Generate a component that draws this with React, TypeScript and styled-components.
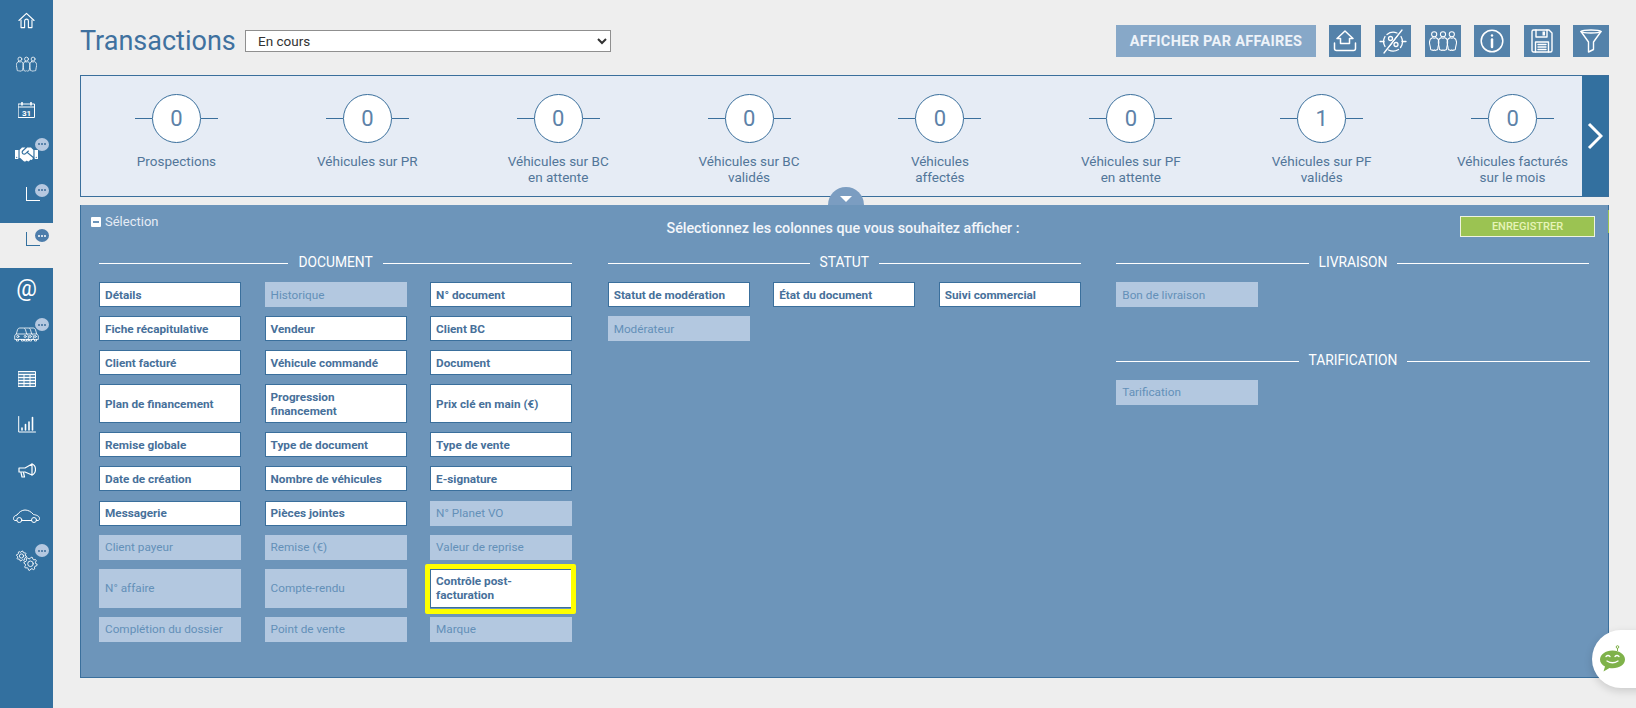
import React from 'react';
import styled, { createGlobalStyle } from 'styled-components';
import { FaHandshake } from 'react-icons/fa';

const Global = createGlobalStyle`
  html, body { margin: 0; padding: 0; background: #eeeeee; height: 708px; overflow: hidden; }
  body { font-family: Roboto, "Liberation Sans", sans-serif; }
  * { box-sizing: border-box; }
`;

const Page = styled.div`display: flex; width: 1636px; height: 708px;`;
const Sidebar = styled.nav`width: 53px; height: 708px; background: #33709f; flex: none;`;
const NavItem = styled.div<{ $active?: boolean }>`
  position: relative; height: 45.4px; display: flex; align-items: center; justify-content: center;
  padding-bottom: 4px; color: ${p => (p.$active ? '#33709f' : '#fff')};
  background: ${p => (p.$active ? '#eeeeee' : 'transparent')};
  &:nth-child(-n+6) { height: 44.67px; }
`;
const Corner = styled.span`
  display: block; width: 14px; height: 14px; margin: 0 0 10px 13px;
  border-left: 1px solid currentColor; border-bottom: 1px solid currentColor;
`;
const Badge = styled.span<{ $active?: boolean; $top: number }>`
  position: absolute; left: 35px; top: ${p => p.$top}px; width: 14px; height: 13px; border-radius: 50%;
  background: ${p => (p.$active ? '#4d7dab' : '#b5c8e0')}; color: ${p => (p.$active ? '#fff' : '#3b6d9a')};
  display: flex; align-items: center; justify-content: center; gap: 1px;
  & > i { width: 2px; height: 2px; border-radius: 50%; background: currentColor; display: block; }
`;
const AtSign = styled.span`font: 400 23px/1 Roboto, sans-serif;`;

const Main = styled.main`flex: 1; min-width: 0; padding: 25px 27px 0;`;
const Header = styled.header`display: flex; align-items: center; height: 32px; margin-bottom: 18px;`;
const Title = styled.h1`margin: 0 10px 0 0; font: 400 27px/32px Roboto, sans-serif; color: #3f719f; width: 155px; white-space: nowrap;`;
const Select = styled.select`
  width: 366px; height: 22px; border: 1px solid #8f8f8f; background: #fff; color: #333;
  font: 400 13.5px Roboto, sans-serif; padding-left: 8px;
`;
const Tools = styled.div`margin-left: auto; display: flex; align-items: stretch; height: 32px;`;
const ByDeal = styled.button`
  width: 200px; margin-right: 13px; border: 0; background: #87a8c8; color: #eef3f9;
  font: 700 14.5px Roboto, sans-serif; letter-spacing: 0.3px; text-transform: uppercase; padding: 0;
`;
const IconBtn = styled.button<{ $w: number; $ml: number }>`
  width: ${p => p.$w}px; margin-left: ${p => p.$ml}px; border: 0; padding: 0; background: #5482aa; color: #fff;
  display: flex; align-items: center; justify-content: center;
`;

const Kpis = styled.section`
  position: relative; height: 122px; background: #e6ecf5; border: 1px solid #3a6f9c;
  display: grid; grid-template-columns: repeat(8, 1fr); padding-top: 18px;
`;
const Kpi = styled.div`display: flex; flex-direction: column; align-items: center;`;
const KpiTop = styled.div`display: flex; align-items: center; margin-bottom: 10px;`;
const Tick = styled.span`width: 17px; height: 1px; background: #3a6f9c;`;
const Circle = styled.span`
  width: 49px; height: 49px; border-radius: 50%; border: 1px solid #3a6f9c; background: #fff;
  color: #5d82a8; font: 400 22px/47px Roboto, sans-serif; text-align: center;
`;
const KpiLabel = styled.span`
  font: 400 13.5px/16px Roboto, sans-serif; color: #527699; text-align: center; white-space: pre-line;
`;
const NextBtn = styled.div`
  position: absolute; top: 0; right: 0; bottom: 0; width: 26px; background: #33709f;
  display: flex; align-items: center; justify-content: center; color: #fff;
`;

const Panel = styled.section`
  position: relative; margin-top: 8px; height: 473px; background: #6d95ba;
  border-left: 1px solid #3a6f9c; border-bottom: 1px solid #3a6f9c; border-right: 1px solid #3a6f9c;
`;
const Notch = styled.div`
  position: absolute; top: -18px; left: 747px; width: 36px; height: 18px; background: #7b9dc1;
  border-radius: 18px 18px 0 0; display: flex; justify-content: center; padding-top: 9px;
  &::after { content: ''; width: 0; height: 0; border-left: 6px solid transparent; border-right: 6px solid transparent; border-top: 6px solid #fff; }
`;
const Sliver = styled.span`position: absolute; top: 5px; right: -1px; width: 1px; height: 23px; background: #9bc352;`;
const Head = styled.div`
  height: 47px; padding: 11px 13px 0 10px; display: grid; grid-template-columns: 1fr auto 1fr; align-items: start;
`;
const Toggle = styled.div`display: flex; align-items: center; gap: 4px; color: #e6ecf5; font: 400 13px/12px Roboto, sans-serif;`;
const Minus = styled.span`
  width: 10px; height: 10px; border-radius: 1px; background: #fff; display: flex; align-items: center; justify-content: center;
  &::after { content: ''; width: 6px; height: 2px; background: #6d95ba; }
`;
const Prompt = styled.div`font: 500 14.3px/20px Roboto, sans-serif; color: #f3f6fa; padding-top: 2px;`;
const Save = styled.button`
  justify-self: end; width: 135px; height: 21px; border: 1px solid #eef3e0; background: #9bc352; color: #e6f4b8;
  font: 500 11px Roboto, sans-serif; padding: 0;
`;
const Columns = styled.div`padding: 0 18.5px 0 18px; display: grid; grid-template-columns: repeat(3, 1fr); column-gap: 35.5px;`;
const Column = styled.div`display: flex; flex-direction: column; gap: 42.5px;`;
const SectionHead = styled.div`
  display: flex; align-items: center; gap: 10px; height: 20px; margin-bottom: 10px;
  color: #fff; font: 400 13.8px/20px Roboto, sans-serif;
  &::before, &::after { content: ''; flex: 1; height: 1px; background: #fff; margin-top: 3px; }
`;
const Items = styled.div`display: grid; grid-template-columns: repeat(3, 1fr); column-gap: 23.5px; row-gap: 9.1px;`;
const Item = styled.div<{ $on?: boolean; $mark?: boolean }>`
  position: relative; min-height: 25px; display: flex; align-items: center; padding: 4.5px 5px;
  font: ${p => (p.$on ? 700 : 400)} 11.75px/14px Roboto, sans-serif;
  background: ${p => (p.$on ? '#fff' : '#b3c8e0')}; color: ${p => (p.$on ? '#47709a' : '#6390b8')};
  border: 1px solid ${p => (p.$on ? '#3a6f9c' : '#b3c8e0')};
  ${p => p.$mark ? `&::after { content: ''; position: absolute; inset: -6px -5px -7px -6px; border: 5px solid #ffff00; border-radius: 2px; pointer-events: none; }` : ''}
`;
const Bot = styled.div`
  position: fixed; left: 1592px; top: 630px; width: 60px; height: 58px; border-radius: 29px 0 0 29px; background: #fff;
  box-shadow: 0 3px 8px rgba(0,0,0,.15); display: flex; padding: 15px 0 0 7px;
`;

const S = { fill: 'none', stroke: 'currentColor', strokeWidth: 1.2, strokeLinecap: 'round' as const, strokeLinejoin: 'round' as const };
const BAR = '#33709f';

const Home = () => <svg width="17" height="17" viewBox="0 0 18 18" {...S}><path d="M1 9 9 1.500 17 9" /><path d="M3.200 8.500V16.500H7V9.500a2 2 0 0 1 4 0v7h3.800V8.500" /></svg>;
const Person = ({ x }: { x: number }) => (
  <g transform={`translate(${x} 0)`}>
    <circle cx="5" cy="3" r="2.500" />
    <path d="M3.200 6.300C1.200 7 .3 9 .5 11.500c.2 2 1 3.500 1 5.500 0 1 1 1.500 1.500 1 .4.800 1.600.800 2 0 .4.800 1.600.800 2 0 .5.500 1.500 0 1.500-1 0-2 .8-3.500 1-5.500.2-2.500-.7-4.500-2.700-5.200-1 .6-2.600.6-3.600 0Z" />
  </g>
);
const People = () => <svg width="21" height="17" viewBox="0 0 27 20" {...S} strokeWidth={1}><Person x={0} /><Person x={8.500} /><Person x={17} /></svg>;
const Calendar = () => (
  <svg width="17" height="16" viewBox="0 0 17 16" {...S} strokeWidth={1}>
    <rect x="0.500" y="2" width="16" height="13.500" /><path d="M0.500 5H16.500" /><path d="M4 0.500V3M13 0.500V3" strokeWidth={1.600} />
    <text x="8.500" y="13.600" textAnchor="middle" fill="currentColor" stroke="none" fontFamily="Roboto" fontWeight="700" fontSize="8">31</text>
  </svg>
);
const FrontCar = ({ x }: { x: number }) => (
  <g transform={`translate(${x} 0)`} fill={BAR}>
    <path d="M2.500 12v2h2v-2M10.500 12v2h2v-2" />
    <path d="M.7 12V8.500L2.300 7 3.500 2.800C3.800 1.600 4.800 1 6 1h3c1.200 0 2.200.6 2.500 1.800L12.700 7l1.600 1.500V12Z" />
    <path d="M2.300 7h10.400" />
    <circle cx="3.800" cy="9.500" r="1.100" /><circle cx="11.200" cy="9.500" r="1.100" />
  </g>
);
const Cars = () => <svg width="25" height="15" viewBox="0 0 25 15" {...S} strokeWidth={0.800}><FrontCar x={10} /><FrontCar x={5} /><FrontCar x={0} /></svg>;
const Table = () => (
  <svg width="18" height="16" viewBox="0 0 18 16" {...S} strokeWidth={1}>
    <rect x="0.500" y="0.500" width="17" height="15" fill="rgba(255,255,255,.25)" />
    <path d="M0.500 3.500H17.500M0.500 6.500H17.500M0.500 9.500H17.500M0.500 12.500H17.500M6 3.500V15.500M12 3.500V15.500" />
  </svg>
);
const Chart = () => (
  <svg width="18" height="17" viewBox="0 0 18 17" {...S}>
    <path d="M0.700 0.500V16H17.500" strokeWidth={1} /><path d="M4 14V12M7.500 14V8.500M11 14V6M14.500 14V1.500" strokeWidth={1.600} />
  </svg>
);
const Mega = () => (
  <svg width="18" height="15" viewBox="0 0 18 15" {...S}>
    <path d="M1 5h6l7-4v11L7 9H1Z" /><path d="M14 1c2.500 1 3.500 3 3.500 5.500S16.500 11 14 12" /><path d="M3 9.500 4 14h2.500L5.500 9.500" />
  </svg>
);
const Car = () => (
  <svg width="27" height="14" viewBox="0 0 27 14" {...S} strokeWidth={1}>
    <path d="M3.500 11.500H2C1 11.500.5 10.500.5 9.500c0-2 1.500-3 3.500-3.500C6 3 9 1 12 1c3 0 6 1.500 8.500 4.500 3 .5 6 1.500 6 4 0 1-.5 2-1.500 2h-1.500M9 11.500h9.500" />
    <circle cx="6.300" cy="11" r="2.500" /><circle cx="21" cy="11" r="2.500" />
  </svg>
);
const gearPath = (r: number, n: number) => {
  const pts: string[] = [];
  for (let i = 0; i < n * 4; i++) {
    const rad = i % 4 < 2 ? r : r * 0.78;
    const a = ((i + 0.5) / (n * 4)) * Math.PI * 2;
    pts.push(`${(Math.cos(a) * rad).toFixed(2)} ${(Math.sin(a) * rad).toFixed(2)}`);
  }
  return `M${pts.join('L')}Z`;
};
const Gear = ({ x, y, r }: { x: number; y: number; r: number }) => (
  <g transform={`translate(${x} ${y})`}><path d={gearPath(r, 8)} /><circle r={r * 0.42} /></g>
);
const Gears = () => <svg width="22" height="21" viewBox="0 0 22 21" {...S} strokeWidth={0.900}><Gear x={5.500} y={6} r={5} /><Gear x={14.500} y={13.800} r={6.600} /></svg>;

const UploadHome = () => <svg width="24" height="22" viewBox="0 0 24 22" {...S} strokeWidth={1.500}><path d="M12 1 4 8.500h3.500v5h9v-5H20Z" /><path d="M1.500 13v5.500a2 2 0 0 0 2 2h17a2 2 0 0 0 2-2V13" /></svg>;
const NoPercent = () => (
  <svg width="28" height="27" viewBox="0 0 28 27" {...S} strokeWidth={1.300}>
    <path d="M8 6.500a10 10 0 0 1 10-1.500M22 8.500a10 10 0 0 1-.5 11M19.500 21.500a10 10 0 0 1-10 .5M6 18.500a10 10 0 0 1 0-10" />
    <path d="M1 13.500h4M23 13.500h4" />
    <path d="M5 25 23 2" />
    <circle cx="11.500" cy="10.500" r="2" /><circle cx="17" cy="16.500" r="2" /><path d="M10.500 18.500 18 8.500" strokeWidth={1} />
  </svg>
);
const Team = () => <svg width="28" height="21" viewBox="0 0 27 20" {...S} strokeWidth={1}><Person x={0} /><Person x={8.500} /><Person x={17} /></svg>;
const Info = () => <svg width="24" height="24" viewBox="0 0 24 24" {...S} strokeWidth={1.500}><circle cx="12" cy="12" r="10.800" /><path d="M12 10.500V18" strokeWidth={2.500} /><circle cx="12" cy="6.500" r="1.200" fill="currentColor" stroke="none" /></svg>;
const Floppy = () => (
  <svg width="22" height="24" viewBox="0 0 22 24" {...S} strokeWidth={1.400}>
    <path d="M1 2.500A1.500 1.500 0 0 1 2.500 1h15.500L21 4v17.500a1.500 1.500 0 0 1-1.500 1.500h-17A1.500 1.500 0 0 1 1 21.500Z" />
    <path d="M5 1v7h11V1" /><rect x="11.500" y="2.500" width="2.500" height="4" fill="currentColor" stroke="none" />
    <path d="M4.500 23V13h13v10M7 15.500h8M7 18h8M7 20.500h8" />
  </svg>
);
const Funnel = () => <svg width="22" height="24" viewBox="0 0 22 24" {...S} strokeWidth={1.400}><path d="M1 2.500c2-2 18-2 20 0L13.500 13v7.500L8.500 23V13Z" /><path d="M1 2.500c2 2 18 2 20 0" /></svg>;

const BotIcon = () => (
  <svg width="27" height="28" viewBox="0 0 27 28">
    <path fill="#7fb24a" d="M13.500 5.500C6.500 5.500 1 9.500 1 14.500c0 3 2 5.500 5 7l-1.500 5 6-3.500c.8.100 1.700.2 3 .2 7 0 12.500-3.700 12.500-8.700s-5.500-9-12.500-9Z" />
    <path stroke="#7fb24a" strokeWidth="1" d="M18.500 6V3" /><circle cx="18.500" cy="2" r="1.300" fill="none" stroke="#7fb24a" />
    <g fill="none" stroke="#fff" strokeWidth="1.300" strokeLinecap="round"><path d="M7 11.500q2-2 4 0M16 11.500q2-2 4 0M8 16q5.500 3.500 11 0" /></g>
  </svg>
);

const kpis = [
  ['0', 'Prospections'], ['0', 'Véhicules sur PR'], ['0', 'Véhicules sur BC\nen attente'], ['0', 'Véhicules sur BC\nvalidés'],
  ['0', 'Véhicules\naffectés'], ['0', 'Véhicules sur PF\nen attente'], ['1', 'Véhicules sur PF\nvalidés'], ['0', 'Véhicules facturés\nsur le mois'],
];

type It = [string, boolean, boolean?];
const doc: It[] = [
  ['Détails', true], ['Historique', false], ['N° document', true],
  ['Fiche récapitulative', true], ['Vendeur', true], ['Client BC', true],
  ['Client facturé', true], ['Véhicule commandé', true], ['Document', true],
  ['Plan de financement', true], ['Progression financement', true], ['Prix clé en main (€)', true],
  ['Remise globale', true], ['Type de document', true], ['Type de vente', true],
  ['Date de création', true], ['Nombre de véhicules', true], ['E-signature', true],
  ['Messagerie', true], ['Pièces jointes', true], ['N° Planet VO', false],
  ['Client payeur', false], ['Remise (€)', false], ['Valeur de reprise', false],
  ['N° affaire', false], ['Compte-rendu', false], ['Contrôle post-facturation', true, true],
  ['Complétion du dossier', false], ['Point de vente', false], ['Marque', false],
];
const statut: It[] = [['Statut de modération', true], ['État du document', true], ['Suivi commercial', true], ['Modérateur', false]];

const Dots = ({ top, active }: { top: number; active?: boolean }) => <Badge $top={top} $active={active}><i /><i /><i /></Badge>;

const Section = ({ name, items }: { name: string; items: It[] }) => (
  <div>
    <SectionHead>{name}</SectionHead>
    <Items>{items.map(([l, on, mark]) => <Item key={l} $on={on} $mark={mark}>{l}</Item>)}</Items>
  </div>
);

export default function App() {
  return (
    <Page>
      <Global />
      <Sidebar>
        <NavItem><Home /></NavItem>
        <NavItem><People /></NavItem>
        <NavItem><Calendar /></NavItem>
        <NavItem><FaHandshake size={23} /><Dots top={4} /></NavItem>
        <NavItem><Corner /><Dots top={5} /></NavItem>
        <NavItem $active><Corner /><Dots top={6} active /></NavItem>
        <NavItem><AtSign>@</AtSign></NavItem>
        <NavItem><Cars /><Dots top={5} /></NavItem>
        <NavItem><Table /></NavItem>
        <NavItem><Chart /></NavItem>
        <NavItem><Mega /></NavItem>
        <NavItem><Car /></NavItem>
        <NavItem><Gears /><Dots top={4} /></NavItem>
      </Sidebar>
      <Main>
        <Header>
          <Title>Transactions</Title>
          <Select defaultValue="En cours"><option>En cours</option></Select>
          <Tools>
            <ByDeal>Afficher par affaires</ByDeal>
            <IconBtn $w={32} $ml={0}><UploadHome /></IconBtn>
            <IconBtn $w={36} $ml={14}><NoPercent /></IconBtn>
            <IconBtn $w={36} $ml={14}><Team /></IconBtn>
            <IconBtn $w={36} $ml={13}><Info /></IconBtn>
            <IconBtn $w={36} $ml={14}><Floppy /></IconBtn>
            <IconBtn $w={36} $ml={13}><Funnel /></IconBtn>
          </Tools>
        </Header>
        <Kpis>
          {kpis.map(([n, l], i) => (
            <Kpi key={i}>
              <KpiTop><Tick /><Circle>{n}</Circle><Tick /></KpiTop>
              <KpiLabel>{l}</KpiLabel>
            </Kpi>
          ))}
          <NextBtn>
            <svg width="16" height="28" viewBox="0 0 16 28" fill="none" stroke="currentColor" strokeWidth="3"><path d="M2 2 14 14 2 26" /></svg>
          </NextBtn>
        </Kpis>
        <Panel>
          <Notch />
          <Sliver />
          <Head>
            <Toggle><Minus />Sélection</Toggle>
            <Prompt>Sélectionnez les colonnes que vous souhaitez afficher :</Prompt>
            <Save>ENREGISTRER</Save>
          </Head>
          <Columns>
            <Column><Section name="DOCUMENT" items={doc} /></Column>
            <Column><Section name="STATUT" items={statut} /></Column>
            <Column>
              <Section name="LIVRAISON" items={[['Bon de livraison', false]]} />
              <Section name="TARIFICATION" items={[['Tarification', false]]} />
            </Column>
          </Columns>
        </Panel>
      </Main>
      <Bot><BotIcon /></Bot>
    </Page>
  );
}
